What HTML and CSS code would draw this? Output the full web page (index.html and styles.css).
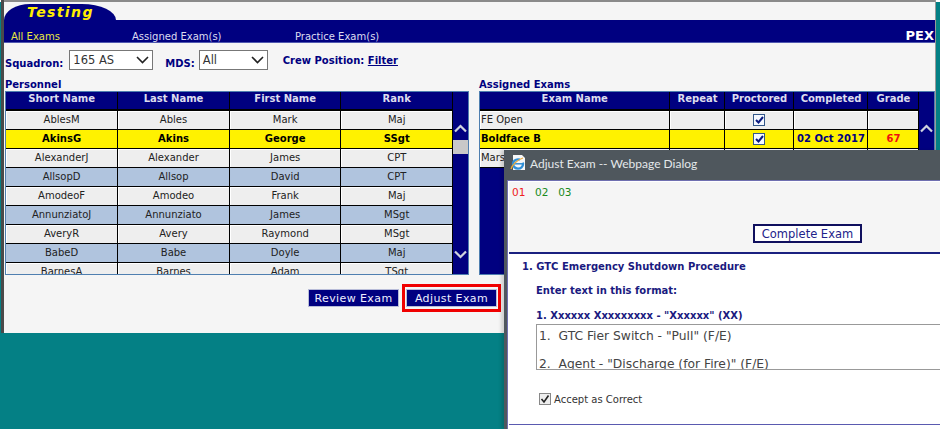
FILE: index.html
```html
<!DOCTYPE html>
<html lang="en">
<head>
  <meta charset="UTF-8">
  <title>Testing</title>
  <link rel="stylesheet" href="styles.css">
</head>
<body>
<div class="desktop">
  <div class="window">
    <div class="tab">Testing</div>
    <div class="navbar">
      <a class="nav-item active">All Exams</a>
      <a class="nav-item assigned">Assigned Exam(s)</a>
      <a class="nav-item practice">Practice Exam(s)</a>
      <span class="pex">PEX</span>
    </div>
    <div class="filters">
      <label class="squadron-label">Squadron:</label>
      <div class="select squadron">165 AS <svg width="13" height="8" viewBox="0 0 13 8"><path d="M1 1l5.500 5.500L12 1" fill="none" stroke="#222" stroke-width="1.600"/></svg></div>
      <label class="mds-label">MDS:</label>
      <div class="select mds">All <svg width="13" height="8" viewBox="0 0 13 8"><path d="M1 1l5.500 5.500L12 1" fill="none" stroke="#222" stroke-width="1.600"/></svg></div>
      <span class="crew">Crew Position: <a>Filter</a></span>
    </div>
    <div class="panels">
      <div class="panel personnel">
        <h4>Personnel</h4>
        <div class="grid-box">
          <div class="grid-clip">
            <table>
              <colgroup><col class="c112"><col class="c112"><col class="c112"><col class="c112"></colgroup>
              <thead><tr><th>Short Name</th><th>Last Name</th><th>First Name</th><th>Rank</th></tr></thead>
              <tbody>
                <tr><td>AblesM</td><td>Ables</td><td>Mark</td><td>Maj</td></tr>
                <tr class="selected"><td>AkinsG</td><td>Akins</td><td>George</td><td>SSgt</td></tr>
                <tr><td>AlexanderJ</td><td>Alexander</td><td>James</td><td>CPT</td></tr>
                <tr class="alt"><td>AllsopD</td><td>Allsop</td><td>David</td><td>CPT</td></tr>
                <tr><td>AmodeoF</td><td>Amodeo</td><td>Frank</td><td>Maj</td></tr>
                <tr class="alt"><td>AnnunziatoJ</td><td>Annunziato</td><td>James</td><td>MSgt</td></tr>
                <tr><td>AveryR</td><td>Avery</td><td>Raymond</td><td>MSgt</td></tr>
                <tr class="alt"><td>BabeD</td><td>Babe</td><td>Doyle</td><td>Maj</td></tr>
                <tr><td>BarnesA</td><td>Barnes</td><td>Adam</td><td>TSgt</td></tr>
              </tbody>
            </table>
          </div>
          <div class="scroll">
            <svg class="chev" width="13" height="9" viewBox="0 0 13 9"><path d="M1 7.500l5.500-5.500L12 7.500" fill="none" stroke="#cfd3de" stroke-width="2.200"/></svg>
            <div class="thumb"></div>
            <svg class="chev down" width="13" height="9" viewBox="0 0 13 9"><path d="M1 1.500L6.500 7 12 1.500" fill="none" stroke="#cfd3de" stroke-width="2.200"/></svg>
          </div>
        </div>
      </div>
      <div class="panel assigned-exams">
        <h4>Assigned Exams</h4>
        <div class="grid-box">
          <div class="grid-clip">
            <table>
              <colgroup><col class="c190"><col class="c55"><col class="c69"><col class="c74"><col class="c51"></colgroup>
              <thead><tr><th>Exam Name</th><th>Repeat</th><th>Proctored</th><th>Completed</th><th>Grade</th></tr></thead>
              <tbody>
                <tr><td class="left">FE Open</td><td></td><td><span class="check"><svg width="9" height="8" viewBox="0 0 9 8"><path d="M1 4l2.500 2.500L8 1" fill="none" stroke="#0a1a80" stroke-width="2"/></svg></span></td><td></td><td></td></tr>
                <tr class="selected"><td class="left">Boldface B</td><td></td><td><span class="check"><svg width="9" height="8" viewBox="0 0 9 8"><path d="M1 4l2.500 2.500L8 1" fill="none" stroke="#0a1a80" stroke-width="2"/></svg></span></td><td class="done">02 Oct 2017</td><td class="grade">67</td></tr>
                <tr><td class="left">Marshall</td><td></td><td></td><td></td><td></td></tr>
              </tbody>
            </table>
          </div>
          <div class="scroll">
            <svg class="chev" width="13" height="9" viewBox="0 0 13 9"><path d="M1 7.500l5.500-5.500L12 7.500" fill="none" stroke="#cfd3de" stroke-width="2.200"/></svg>
          </div>
        </div>
      </div>
    </div>
    <div class="actions">
      <button class="btn">Review Exam</button>
      <span class="highlight"><button class="btn">Adjust Exam</button></span>
    </div>
  </div>

  <div class="dialog">
    <div class="dialog-title">
      <svg width="18" height="18" viewBox="0 0 18 18"><path d="M4 1h9l3 3v12H4z" fill="#f6f7f8"/><ellipse cx="9" cy="10" rx="5" ry="4.600" fill="none" stroke="#2f8fd8" stroke-width="2.400" stroke-dasharray="24 4"/><path d="M4.500 9.800h9" stroke="#2f8fd8" stroke-width="1.500"/><path d="M2 15c1-4 6-9 12-11" fill="none" stroke="#e9a93a" stroke-width="1.200"/></svg>
      <span>Adjust Exam -- Webpage Dialog</span>
    </div>
    <div class="dialog-body">
      <div class="dialog-head">
        <div class="steps"><span class="wrong">01</span><span class="right">02</span><span class="right">03</span></div>
        <button class="complete">Complete Exam</button>
      </div>
      <div class="question">
        <p class="q-title">1. GTC Emergency Shutdown Procedure</p>
        <p class="q-sub">Enter text in this format:</p>
        <p class="q-sub format">1. Xxxxxx Xxxxxxxxx - "Xxxxxx" (XX)</p>
        <div class="answer">
          <p>1.&nbsp; GTC Fier Switch - "Pull" (F/E)</p>
          <p>2.&nbsp; Agent - "Discharge (for Fire)" (F/E)</p>
        </div>
        <div class="accept">
          <span class="accept-box"><svg width="10" height="10" viewBox="0 0 10 10"><path d="M1.500 5l2.500 3L8.500 1.500" fill="none" stroke="#222" stroke-width="1.600"/></svg></span>
          Accept as Correct
        </div>
      </div>
    </div>
  </div>
</div>
</body>
</html>
```

FILE: styles.css
```css
* { box-sizing: border-box; }
body {
  margin: 0;
  background: #fff;
  font-family: "DejaVu Sans", Verdana, sans-serif;
  font-size: 10px;
  color: #222;
}
.desktop {
  position: relative;
  width: 940px;
  height: 429px;
  overflow: hidden;
  padding-left: 1px;
  background: linear-gradient(#fff 0 2px, #048085 2px);
}
.window {
  width: 935px;
  height: 333px;
  padding-top: 2px;
  background: #f5f5f5;
  border-left: 3px solid #4a4a4a;
  border-right: 1px solid #999;
  box-shadow: inset 0 2px 0 #8a8a8a;
}
.tab {
  width: 112px;
  height: 16px;
  margin-top: 2px;
  padding: 1px 0 0 23px;
  background: #000080;
  border-radius: 26px 34px 0 0 / 16px 16px 0 0;
  color: #ffee00;
  font: italic bold 14px/15px "DejaVu Sans", sans-serif;
  letter-spacing: 1.400px;
}
.navbar {
  display: flex;
  align-items: flex-end;
  height: 23px;
  background: #000080;
  border-bottom: 1px solid #5058b0;
  color: #dcdcf0;
  font-size: 10px;
}
.nav-item { display: block; line-height: 10px; }
.active { width: 121px; margin-left: 7px; color: #e8e840; }
.assigned { width: 163px; }
.pex {
  margin-left: auto;
  padding-right: 1px;
  color: #fff;
  font-weight: bold;
  font-size: 13px;
  line-height: 12px;
}
.filters {
  display: flex;
  align-items: center;
  height: 20px;
  margin-top: 7px;
  padding-left: 1px;
  color: #000080;
  font-weight: bold;
}
.squadron-label { margin: 6px 6px 0 0; }
.mds-label { margin: 6px 4px 0 12px; }
.select {
  display: flex;
  align-items: center;
  justify-content: space-between;
  height: 20px;
  padding: 0 3px 0 3px;
  background: #fff;
  border: 1px solid #777;
  color: #333;
  font-weight: normal;
  font-size: 11.500px;
}
.squadron { width: 84px; }
.mds { width: 69px; }
.crew { margin: 1px 0 0 15px; }
.crew a { text-decoration: underline; }
.panels {
  display: flex;
  gap: 10px;
  margin-top: 8px;
  padding-left: 1px;
}
.panel h4 {
  margin: 0;
  height: 13px;
  color: #000080;
  font-size: 10px;
  line-height: 13px;
}
.personnel { width: 465px; }
.assigned-exams { width: 457px; }
.grid-box {
  display: flex;
  height: 184px;
  background: #000080;
  border: 1px solid #4f7fb0;
}
.grid-clip {
  height: 182px;
  overflow: hidden;
}
table {
  border-collapse: collapse;
  table-layout: fixed;
}
.c112 { width: 112px; }
.c190 { width: 190px; }
.c55 { width: 55px; }
.c69 { width: 69px; }
.c74 { width: 74px; }
.c51 { width: 51px; }
th {
  height: 18px;
  padding: 0 0 3px;
  background: #000080;
  border-right: 1px solid #000;
  border-bottom: 2px solid #000;
  color: #dde;
  font-size: 10px;
  line-height: 12px;
}
td {
  height: 19px;
  padding: 0;
  background: #eee;
  border: 1px solid #000;
  border-top: 0;
  border-left: 0;
  box-shadow: inset 1px 1px 0 #fff;
  text-align: center;
  font-size: 10px;
  line-height: 12px;
  white-space: nowrap;
  overflow: hidden;
}
td.left { text-align: left; padding-left: 1px; }
.alt td { background: #b0c4de; box-shadow: none; }
.selected td {
  background: #fff200;
  box-shadow: none;
  color: #000;
  font-weight: bold;
}
.selected td.done { color: #000080; }
.selected td.grade { color: #f01010; }
.check {
  display: inline-flex;
  align-items: center;
  justify-content: center;
  width: 12px;
  height: 12px;
  vertical-align: middle;
  background: #f4f8ff;
  border: 1px solid #33588a;
}
.scroll {
  flex: 1;
  display: flex;
  flex-direction: column;
  align-items: center;
  padding-top: 32px;
}
.thumb {
  width: 15px;
  height: 14px;
  margin-top: 7px;
  background: #c8c8c8;
}
.chev.down {
  margin-top: auto;
  margin-bottom: 15px;
}
.actions {
  display: flex;
  justify-content: flex-end;
  align-items: center;
  gap: 3px;
  margin-top: 9px;
  padding-right: 434px;
}
.btn {
  width: 91px;
  height: 18px;
  padding: 0;
  background: #000080;
  border: 1px solid #b8bcd8;
  color: #eef;
  font-family: inherit;
  font-size: 11px;
  letter-spacing: 0.400px;
}
.highlight {
  display: flex;
  align-items: center;
  justify-content: center;
  width: 99px;
  height: 28px;
  border: 3px solid #f00000;
}
.dialog {
  position: absolute;
  top: 150px;
  left: 504px;
  width: 436px;
  height: 279px;
  display: flex;
  flex-direction: column;
  background: #4f575d;
  box-shadow: -3px 0 3px rgba(0, 0, 0, 0.15);
}
.dialog-title {
  display: flex;
  align-items: center;
  gap: 3px;
  height: 28px;
  padding: 0 0 2px 5px;
  color: #e4e8ea;
  font: 12px "Lato", sans-serif;
}
.dialog-body {
  flex: 1;
  margin: 2px 0 0 3px;
  padding: 1px 0 0 1px;
  background: #fff;
  border-top: 1px solid #6f6fb0;
  border-left: 1px solid #6f6fb0;
}
.dialog-head {
  display: flex;
  flex-direction: column;
  height: 72px;
  padding: 4px 0 0 3px;
  background: #f5f5f5;
  border-bottom: 2px solid #1a2080;
}
.steps {
  display: flex;
  gap: 9.700px;
  font-size: 10.500px;
}
.wrong { color: #ee2020; }
.right { color: #1a8a1a; }
.complete {
  align-self: flex-start;
  width: 109px;
  height: 19px;
  margin: 26px 0 0 241px;
  padding: 0;
  background: #fff;
  border: 2px solid #10105e;
  color: #22228a;
  font-family: inherit;
  font-size: 11.500px;
}
.question {
  height: 171px;
  padding: 6px 0 0 13px;
  background: #fff;
  border-bottom: 1px solid #5a5ab0;
  color: #1a1a80;
  font-weight: bold;
  font-size: 10px;
}
.question p { margin: 0; line-height: 13px; }
.q-sub { margin: 11px 0 0 14px !important; }
.q-sub.format { margin-top: 12px !important; }
.answer {
  width: 420px;
  height: 46px;
  margin: 2px 0 0 14px;
  padding: 4px 3px 0 2px;
  overflow: hidden;
  background: #fff;
  border: 1px solid #999;
  color: #444;
  font-weight: normal;
  font-size: 12.300px;
}
.answer p { line-height: 15px; margin-bottom: 13px !important; }
.accept {
  display: flex;
  align-items: center;
  gap: 3px;
  margin: 23px 0 0 17px;
  color: #333;
  font-weight: normal;
  font-size: 10px;
}
.accept-box {
  display: flex;
  align-items: center;
  justify-content: center;
  width: 12px;
  height: 12px;
  background: #eee;
  border: 1px solid #888;
}
```
